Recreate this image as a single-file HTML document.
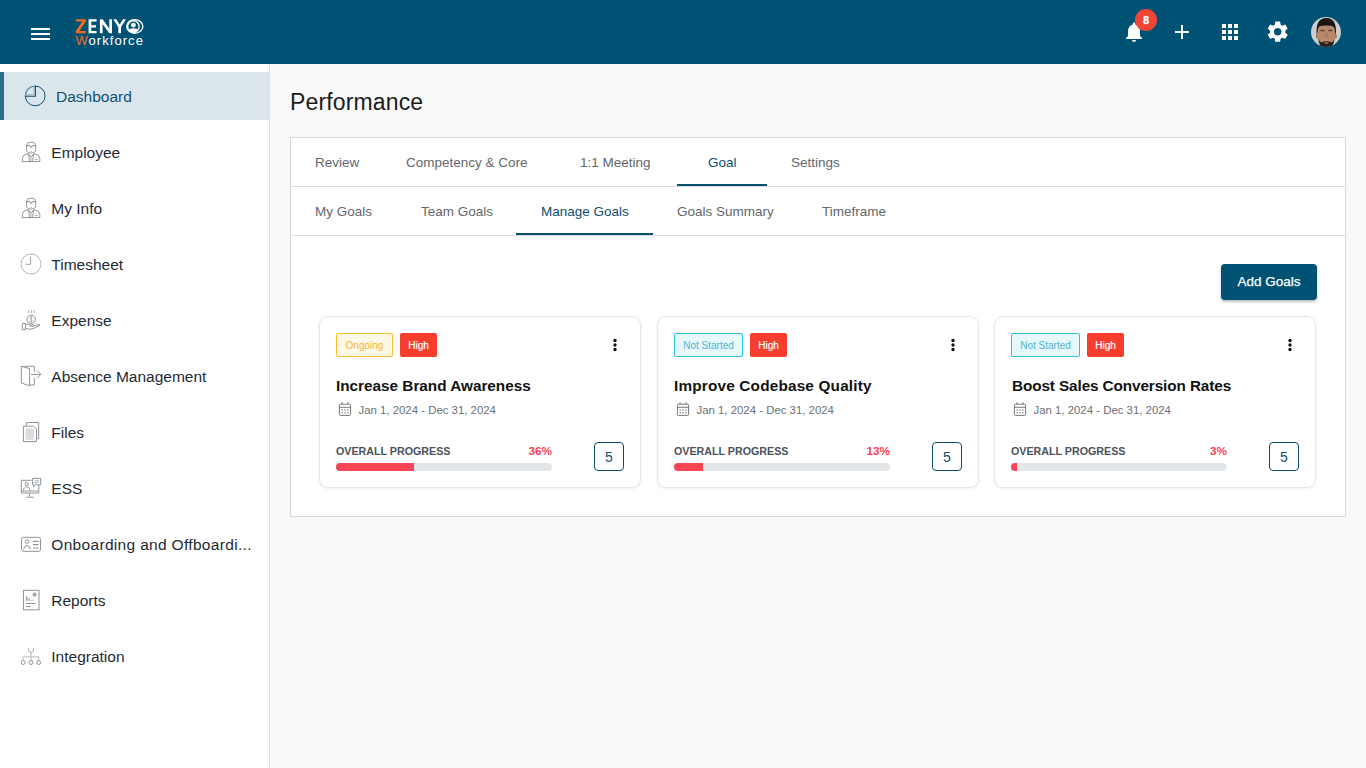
<!DOCTYPE html>
<html>
<head>
<meta charset="utf-8">
<style>
*{margin:0;padding:0;box-sizing:border-box;}
html,body{width:1366px;height:768px;overflow:hidden;}
body{font-family:"Liberation Sans",sans-serif;background:#f9f9f9;position:relative;color:#1e2a35;}
.abs{position:absolute;}
#hdr{position:absolute;left:0;top:0;width:1366px;height:64px;background:#005274;}
#side{position:absolute;left:0;top:64px;width:270px;height:704px;background:#fff;border-right:1px solid #dfdfdf;}
.nav{position:absolute;left:0;width:269px;height:48px;}
.nav .lbl{position:absolute;left:51.3px;top:1px;line-height:48px;font-size:15.5px;color:#1f2933;white-space:nowrap;}
.nav svg{position:absolute;}
#dash{background:#dbe5ec;}
#dash .bar{position:absolute;left:0;top:0;width:4px;height:48px;background:#2e6e8b;}
#dash .lbl{left:56px;color:#0e5274;}
.title{position:absolute;left:290px;top:87px;font-size:23px;letter-spacing:.15px;line-height:30px;color:#1b1b1b;}
#box{position:absolute;left:290px;top:137px;width:1056px;height:380px;background:#fff;border:1px solid #d9d9d9;}
.tab{position:absolute;font-size:13.5px;line-height:21px;color:#62676d;white-space:nowrap;}
.tab.on{color:#0d5070;}
.uline{position:absolute;height:2px;background:#0b4f6c;}
.hline{position:absolute;left:291px;width:1054px;height:1px;background:#dcdcdc;}
#addbtn{position:absolute;left:1221px;top:264px;width:96px;height:36px;background:#005274;border-radius:4px;box-shadow:0 2px 3px rgba(0,0,0,.25);color:#fff;font-size:13.5px;line-height:36px;text-align:center;-webkit-text-stroke:.25px #fff;}
.card{position:absolute;top:317px;width:320px;height:170px;background:#fff;border-radius:8px;box-shadow:0 0 0 1px #e6e8ec,0 1px 4px rgba(0,0,0,.10);}
.badge{position:absolute;top:16px;height:24px;font-size:10px;line-height:22px;padding-top:1px;text-align:center;border-radius:2px;}
.b-on{left:16px;width:57px;border:1px solid #fbbd2a;background:#fff8e7;color:#f6b52f;}
.b-ns{left:16px;width:69px;border:1px solid #2bc4dc;background:#e6f8fb;color:#4db5d1;}
.b-hi{width:37px;background:#f63d2e;color:#fff;line-height:23px;-webkit-text-stroke:.2px #fff;}
.ctitle{position:absolute;left:16px;top:59px;font-size:15.3px;font-weight:bold;color:#121212;line-height:20px;white-space:nowrap;}
.cdate{position:absolute;left:38.5px;top:85px;font-size:11.4px;color:#6b6f76;line-height:16px;white-space:nowrap;}
.cal{position:absolute;left:18px;top:85px;}
.plbl{position:absolute;left:16px;top:127px;font-size:10.7px;font-weight:bold;color:#4b525c;line-height:14px;}
.ppct{position:absolute;right:88px;top:127px;font-size:11.8px;font-weight:bold;color:#f3445a;line-height:14px;}
.track{position:absolute;left:16px;top:146px;width:216px;height:8px;background:#e3e6e9;border-radius:4px;overflow:hidden;}
.fill{position:absolute;left:0;top:0;height:8px;background:#f84556;}
.five{position:absolute;left:274px;top:125px;width:30px;height:29px;border:1.5px solid #0b5070;border-radius:4px;color:#0b5070;font-size:14px;line-height:26px;padding-top:1px;text-align:center;}
.dots{position:absolute;left:290px;top:20px;}
</style>
</head>
<body>
<div id="hdr">
  <!-- hamburger -->
  <div class="abs" style="left:31px;top:28px;width:19px;height:2px;background:#fff"></div>
  <div class="abs" style="left:31px;top:33px;width:19px;height:2px;background:#fff"></div>
  <div class="abs" style="left:31px;top:38px;width:19px;height:2px;background:#fff"></div>
  <svg class="abs" style="left:0;top:0" width="1366" height="64" viewBox="0 0 1366 64">
    <path fill="#f26a1f" d="M76 19.2H85.8V21.6L79.4 30.9H85.8V33.3H75.9V30.9L82.3 21.6H76Z"/>
    <path fill="#fff" d="M88.6 19.2H96.6V21.6H91.3V25.2H96V27.5H91.3V30.9H96.6V33.3H88.6Z"/>
    <path fill="#fff" d="M99.9 19.2H102.6L109.3 28.6V19.2H112V33.3H109.3L102.6 23.9V33.3H99.9Z"/>
    <path fill="#fff" d="M113.3 19.2H116.3L119.65 24.6L123 19.2H126L121 27.2V33.3H118.3V27.2Z"/>
    <g fill="none" stroke="#fff" stroke-width="1.35">
      <ellipse cx="134.75" cy="26.45" rx="8.1" ry="6.8"/>
      <circle cx="133.4" cy="26.5" r="5.75"/>
    </g>
    <circle cx="133.4" cy="25.1" r="2.45" fill="#fff"/>
    <path d="M128.4 30.6Q129.6 28.3 133.4 28.3Q137.2 28.3 138.4 30.6Q136.4 33 133.4 33Q130.4 33 128.4 30.6Z" fill="#fff"/>
  </svg>
  <div class="abs" style="left:75.5px;top:33.8px;font-size:13px;line-height:14px;letter-spacing:1.05px;color:#fff;white-space:nowrap"><span style="color:#f26a1f">W</span>orkforce</div>
  <svg class="abs" style="left:1122px;top:20px" width="24" height="24" viewBox="0 0 24 24"><path fill="#fff" d="M12 22c1.1 0 2-.9 2-2h-4c0 1.1.89 2 2 2zm6-6v-5c0-3.070-1.64-5.64-4.5-6.32V4c0-.83-.67-1.5-1.5-1.5s-1.5.67-1.5 1.5v.68C7.63 5.36 6 7.92 6 11v5l-2 2v1h16v-1l-2-2z"/></svg>
  <div class="abs" style="left:1135px;top:9px;width:22px;height:22px;border-radius:11px;background:#f24537;color:#fff;font-size:11px;font-weight:bold;line-height:22px;text-align:center;-webkit-text-stroke:.3px #fff">8</div>
  <svg class="abs" style="left:1170px;top:20px" width="24" height="24" viewBox="0 0 24 24"><path fill="#fff" d="M19 13h-6v6h-2v-6H5v-2h6V5h2v6h6v2z"/></svg>
  <svg class="abs" style="left:1218px;top:20px" width="24" height="24" viewBox="0 0 24 24"><path fill="#fff" d="M4 8h4V4H4v4zm6 12h4v-4h-4v4zm-6 0h4v-4H4v4zm0-6h4v-4H4v4zm6 0h4v-4h-4v4zm6-10v4h4V4h-4zm-6 4h4V4h-4v4zm6 6h4v-4h-4v4zm0 6h4v-4h-4v4z"/></svg>
  <svg class="abs" style="left:1265.3px;top:19.3px" width="25.4" height="25.4" viewBox="0 0 24 24"><path fill="#fff" d="M19.14 12.94c.04-.3.06-.61.06-.94 0-.32-.02-.64-.07-.94l2.030-1.58c.18-.14.23-.41.12-.61l-1.92-3.32c-.12-.22-.37-.29-.59-.22l-2.39.96c-.5-.38-1.03-.7-1.62-.94l-.36-2.54c-.04-.24-.24-.41-.48-.41h-3.84c-.24 0-.43.17-.47.41l-.36 2.54c-.59.24-1.13.57-1.62.94l-2.39-.96c-.22-.08-.47 0-.59.22L2.74 8.87c-.12.21-.08.47.12.61l2.03 1.58c-.05.3-.09.63-.09.94s.02.64.07.94l-2.03 1.58c-.18.14-.23.41-.12.61l1.92 3.32c.12.22.37.29.59.22l2.39-.96c.5.38 1.03.7 1.62.94l.36 2.54c.05.24.24.41.48.41h3.84c.24 0 .44-.17.47-.41l.36-2.54c.59-.24 1.13-.56 1.62-.94l2.39.96c.22.08.47 0 .59-.22l1.92-3.32c.12-.22.07-.47-.12-.61l-2.01-1.58zM12 15.6c-1.98 0-3.6-1.62-3.6-3.6s1.62-3.6 3.6-3.6 3.6 1.62 3.6 3.6-1.62 3.6-3.6 3.6z"/></svg>
  <svg class="abs" style="left:1310px;top:16px" width="32" height="32" viewBox="0 0 32 32">
    <defs><clipPath id="avc"><circle cx="16" cy="16" r="15"/></clipPath></defs>
    <circle cx="16" cy="16" r="15" fill="#cdcdcd"/>
    <g clip-path="url(#avc)">
      <path d="M6 34Q8 27.5 16.3 27.5Q24.5 27.5 26.5 34Z" fill="#7e5440"/>
      <ellipse cx="7.2" cy="20.3" rx="1.3" ry="2.4" fill="#a67a5f"/>
      <ellipse cx="25.6" cy="20.3" rx="1.3" ry="2.4" fill="#a67a5f"/>
      <ellipse cx="16.4" cy="18" rx="9.2" ry="11.3" fill="#b9896b"/>
      <path d="M6.8 19.5C5.8 8 8.5 2.2 16.3 2C24.1 2.2 26.8 8 25.8 19.5L24.9 15.5Q24.8 10.2 21 9.8Q16.3 9.2 11.6 9.8Q7.8 10.2 7.7 15.5Z" fill="#1c1512"/>
      <path d="M8.3 22Q8.8 32.5 16.4 33Q24 32.5 24.5 22Q23.3 26.3 21 26.2Q16.4 24.2 11.8 26.2Q9.5 26.3 8.3 22Z" fill="#2b201a"/>
      <ellipse cx="16.4" cy="27" rx="2.2" ry="0.9" fill="#8c6352"/>
      <path d="M10.6 14.6h4M18.4 14.6h4" stroke="#54403a" stroke-width="1.5"/>
      <path d="M16.4 17v4" stroke="#a27659" stroke-width="1.6"/>
    </g>
  </svg>
</div>
<div id="side">
<svg class="abs" style="left:0;top:0;z-index:2" width="270" height="700" viewBox="0 64 270 700">
  <g fill="none">
    <circle cx="35.2" cy="95.9" r="9.9" stroke="#0d5272" stroke-width="1"/>
    <path d="M25.3 95.9A9.9 9.9 0 0 1 35.2 86" stroke="#6f98ad" stroke-width="1.1"/>
    <path d="M33.9 86.8V94.8H25.8" stroke="#a3bfcc" stroke-width="1.2"/>
    <path d="M35.4 86V96.3H25.2" stroke="#0d5272" stroke-width="1.1"/>
  </g>
  <g fill="none" stroke="#8d949a" stroke-width="1">
    <!-- employee -->
    <g>
      <path d="M26.4 146V149.3Q26.6 153 31.1 153.2Q35.6 153 35.8 149.3V146Q35.8 142.2 31.1 142.2Q26.4 142.2 26.4 146Z"/>
      <path d="M26.5 146.2Q29 144.2 31.1 147.3Q33.2 144.2 35.7 146.2" stroke-width="1.1"/>
      <path d="M28.2 148.5h1.5M32.5 148.5h1.5" stroke="#c9cdd1" stroke-width=".6"/>
      <path d="M30.5 151.3h1.2" stroke="#9b8f8a" stroke-width=".8"/>
      <path d="M22.4 161.6V158.5Q22.5 155 26.5 154.2L28.3 153.8L31.1 157L33.9 153.8L35.7 154.2Q39.7 155 39.8 158.5V161.6Z"/>
      <path d="M28.3 153.8L29.8 161.6M33.9 153.8L32.4 161.6" stroke-width=".9"/>
      <path d="M30.7 157.6L30.4 160.2L31.1 161L31.8 160.2L31.5 157.6" stroke="#b5babe" stroke-width=".7"/>
      <path d="M34.8 159.6H37.6" stroke="#9a8f8c" stroke-width=".8"/>
    </g>
    <g transform="translate(0 56)">
      <path d="M26.4 146V149.3Q26.6 153 31.1 153.2Q35.6 153 35.8 149.3V146Q35.8 142.2 31.1 142.2Q26.4 142.2 26.4 146Z"/>
      <path d="M26.5 146.2Q29 144.2 31.1 147.3Q33.2 144.2 35.7 146.2" stroke-width="1.1"/>
      <path d="M28.2 148.5h1.5M32.5 148.5h1.5" stroke="#c9cdd1" stroke-width=".6"/>
      <path d="M30.5 151.3h1.2" stroke="#9b8f8a" stroke-width=".8"/>
      <path d="M22.4 161.6V158.5Q22.5 155 26.5 154.2L28.3 153.8L31.1 157L33.9 153.8L35.7 154.2Q39.7 155 39.8 158.5V161.6Z"/>
      <path d="M28.3 153.8L29.8 161.6M33.9 153.8L32.4 161.6" stroke-width=".9"/>
      <path d="M30.7 157.6L30.4 160.2L31.1 161L31.8 160.2L31.5 157.6" stroke="#b5babe" stroke-width=".7"/>
      <path d="M34.8 159.6H37.6" stroke="#9a8f8c" stroke-width=".8"/>
    </g>
    <!-- clock -->
    <circle cx="31" cy="264" r="10" stroke="#b3b8bd"/>
    <path d="M30.6 256.8V264.3H25.6" stroke="#9ba1a6"/>
    <!-- expense -->
    <circle cx="31.2" cy="319.2" r="4.2"/>
    <path d="M32.5 317.3Q31.2 316.3 30.1 317.2Q29.6 318.4 31.2 319.2Q32.8 320 32.2 321.2Q31 322.1 29.8 321.1M31.2 315.9V322.6" stroke-width=".7"/>
    <path d="M28.6 310.5V313M31.3 310.2V313.2M34 310.5V313" stroke-width=".8"/>
    <path d="M22.3 323.5H25.4V329.6H22.3Z"/>
    <path d="M25.4 324.6Q28 323.4 30.5 324.8H33.5Q34.8 325.3 33.6 326.2H29.5M33.6 326.2L39.5 324.2Q40.3 324.6 39.6 325.4Q35 328.3 32 329Q28.6 329.4 25.4 328.3"/>
    <!-- absence door -->
    <path d="M34.3 371.5V366.3H21.3V383L29.6 385.7V368.5L21.3 366.3"/>
    <path d="M34.3 378V385H29.6"/>
    <path d="M31.2 374.4H40.6M37 370.6L40.8 374.4L37 378.2"/>
    <!-- files -->
    <path d="M26.5 425.5V422.5H38.7V438.5H36.3"/>
    <path d="M23.4 426.2H33.6L36.5 429.1V441.6H23.4Z"/>
    <rect x="25.6" y="428.4" width="8.3" height="11.4" fill="#d9dcdf" stroke="none"/>
    <!-- ESS -->
    <path d="M31.5 480.3H21.3V493H38.8V484.5"/>
    <path d="M29.4 493.2V496.6M26.2 497.3H33.6" stroke-width="1.1"/>
    <path d="M32.6 478.3H40.6V484.8H35.5L33.7 486.6V484.8H32.6Z" fill="#fff"/>
    <path d="M34.5 480.8H39M34.5 482.6H38.6" stroke-width=".7"/>
    <circle cx="26.7" cy="484.1" r="1.6"/>
    <path d="M23.3 491.3Q23.6 486.9 26.7 486.9Q29.8 486.9 30.1 491.3M21.3 491H38.8" stroke-width=".9"/>
    <!-- onboarding id card -->
    <rect x="21.5" y="537.3" width="19" height="14" rx="2"/>
    <circle cx="27" cy="541.6" r="1.7"/>
    <path d="M23.7 549.4Q23.9 545.4 27 545.4Q30.1 545.4 30.3 549.4"/>
    <path d="M33 541.4H38.5M33 544.6H38.5M33 548H38.5" stroke-width="1.1"/>
    <!-- reports -->
    <rect x="23.5" y="590.3" width="15.5" height="19.5"/>
    <path d="M26.3 600.8V596M27.8 600.8V597.2M29.4 600.8V598.5M31.6 600.8V599.8M33 600.8V599.5" stroke-width=".9"/>
    <circle cx="34.6" cy="594.6" r="1.6" fill="#b0b5ba"/>
    <path d="M26 603.5H35.4M26 606.5H31" stroke-width="1.1"/>
    <!-- integration -->
    <path d="M28.4 647.7V649.6Q28.4 652.4 31 652.4Q33.6 652.4 33.6 649.6V647.7" stroke="#a7adb2"/>
    <path d="M31 652.4V656.9M23.2 660.2V656.9H38.7V660.2M31 656.9V660.2" stroke="#b3b8bc"/>
    <circle cx="23.2" cy="662.5" r="2"/>
    <circle cx="31" cy="662.5" r="2"/>
    <circle cx="38.7" cy="662.5" r="2"/>
  </g>
</svg>
  <div class="nav" id="dash" style="top:8px"><div class="bar"></div><span class="lbl">Dashboard</span></div>
  <div class="nav" style="top:64px"><span class="lbl">Employee</span></div>
  <div class="nav" style="top:120px"><span class="lbl">My Info</span></div>
  <div class="nav" style="top:176px"><span class="lbl">Timesheet</span></div>
  <div class="nav" style="top:232px"><span class="lbl">Expense</span></div>
  <div class="nav" style="top:288px"><span class="lbl">Absence Management</span></div>
  <div class="nav" style="top:344px"><span class="lbl">Files</span></div>
  <div class="nav" style="top:400px"><span class="lbl">ESS</span></div>
  <div class="nav" style="top:456px"><span class="lbl" style="letter-spacing:.32px">Onboarding and Offboardi...</span></div>
  <div class="nav" style="top:512px"><span class="lbl">Reports</span></div>
  <div class="nav" style="top:568px"><span class="lbl">Integration</span></div>
</div>
<div class="title">Performance</div>
<div id="box"></div>
<div class="hline" style="top:186px"></div>
<div class="hline" style="top:235px"></div>
<div class="tab" style="left:315px;top:152px">Review</div>
<div class="tab" style="left:406px;top:152px">Competency &amp; Core</div>
<div class="tab" style="left:580px;top:152px">1:1 Meeting</div>
<div class="tab on" style="left:708px;top:152px">Goal</div>
<div class="tab" style="left:791px;top:152px">Settings</div>
<div class="uline" style="left:677px;top:184px;width:90px"></div>
<div class="tab" style="left:315px;top:201px">My Goals</div>
<div class="tab" style="left:421px;top:201px">Team Goals</div>
<div class="tab on" style="left:541px;top:201px">Manage Goals</div>
<div class="tab" style="left:677px;top:201px">Goals Summary</div>
<div class="tab" style="left:822px;top:201px">Timeframe</div>
<div class="uline" style="left:516px;top:233px;width:137px"></div>
<div id="addbtn">Add Goals</div>

<div class="card" style="left:320px">
  <div class="badge b-on">Ongoing</div>
  <div class="badge b-hi" style="left:80px">High</div>
  <div class="ctitle">Increase Brand Awareness</div>
  <svg class="cal" width="14" height="16" viewBox="0 0 14 16"><g fill="none" stroke="#74777c" stroke-width="1"><rect x="1.4" y="2.2" width="11.2" height="11.2" rx="1"/><path d="M1.4 5.3H12.6M4 0.2V2.2M10 0.2V2.2"/></g><g fill="#8a8d92"><rect x="3.5" y="7.3" width="1.4" height="1.4"/><rect x="6.3" y="7.3" width="1.4" height="1.4"/><rect x="9.2" y="7.3" width="1.4" height="1.4"/><rect x="3.5" y="10" width="1.4" height="1.4"/><rect x="6.3" y="10" width="1.4" height="1.4"/><rect x="9.2" y="10" width="1.4" height="1.4"/></g></svg>
  <svg class="dots" width="10" height="16" viewBox="0 0 10 16"><g fill="#111"><circle cx="5" cy="3.5" r="1.65"/><circle cx="5" cy="8" r="1.65"/><circle cx="5" cy="12.5" r="1.65"/></g></svg>
  <div class="cdate">Jan 1, 2024 - Dec 31, 2024</div>
  <div class="plbl">OVERALL PROGRESS</div>
  <div class="ppct">36%</div>
  <div class="track"><div class="fill" style="width:78px"></div></div>
  <div class="five">5</div>
</div>
<div class="card" style="left:658px">
  <div class="badge b-ns">Not Started</div>
  <div class="badge b-hi" style="left:92px">High</div>
  <div class="ctitle" style="letter-spacing:.2px">Improve Codebase Quality</div>
  <svg class="cal" width="14" height="16" viewBox="0 0 14 16"><g fill="none" stroke="#74777c" stroke-width="1"><rect x="1.4" y="2.2" width="11.2" height="11.2" rx="1"/><path d="M1.4 5.3H12.6M4 0.2V2.2M10 0.2V2.2"/></g><g fill="#8a8d92"><rect x="3.5" y="7.3" width="1.4" height="1.4"/><rect x="6.3" y="7.3" width="1.4" height="1.4"/><rect x="9.2" y="7.3" width="1.4" height="1.4"/><rect x="3.5" y="10" width="1.4" height="1.4"/><rect x="6.3" y="10" width="1.4" height="1.4"/><rect x="9.2" y="10" width="1.4" height="1.4"/></g></svg>
  <svg class="dots" width="10" height="16" viewBox="0 0 10 16"><g fill="#111"><circle cx="5" cy="3.5" r="1.65"/><circle cx="5" cy="8" r="1.65"/><circle cx="5" cy="12.5" r="1.65"/></g></svg>
  <div class="cdate">Jan 1, 2024 - Dec 31, 2024</div>
  <div class="plbl">OVERALL PROGRESS</div>
  <div class="ppct">13%</div>
  <div class="track"><div class="fill" style="width:29px"></div></div>
  <div class="five">5</div>
</div>
<div class="card" style="left:995px">
  <div class="badge b-ns">Not Started</div>
  <div class="badge b-hi" style="left:92px">High</div>
  <div class="ctitle" style="left:17px;letter-spacing:-.1px">Boost Sales Conversion Rates</div>
  <svg class="cal" width="14" height="16" viewBox="0 0 14 16"><g fill="none" stroke="#74777c" stroke-width="1"><rect x="1.4" y="2.2" width="11.2" height="11.2" rx="1"/><path d="M1.4 5.3H12.6M4 0.2V2.2M10 0.2V2.2"/></g><g fill="#8a8d92"><rect x="3.5" y="7.3" width="1.4" height="1.4"/><rect x="6.3" y="7.3" width="1.4" height="1.4"/><rect x="9.2" y="7.3" width="1.4" height="1.4"/><rect x="3.5" y="10" width="1.4" height="1.4"/><rect x="6.3" y="10" width="1.4" height="1.4"/><rect x="9.2" y="10" width="1.4" height="1.4"/></g></svg>
  <svg class="dots" width="10" height="16" viewBox="0 0 10 16"><g fill="#111"><circle cx="5" cy="3.5" r="1.65"/><circle cx="5" cy="8" r="1.65"/><circle cx="5" cy="12.5" r="1.65"/></g></svg>
  <div class="cdate">Jan 1, 2024 - Dec 31, 2024</div>
  <div class="plbl">OVERALL PROGRESS</div>
  <div class="ppct">3%</div>
  <div class="track"><div class="fill" style="width:6px"></div></div>
  <div class="five">5</div>
</div>
</body>
</html>
